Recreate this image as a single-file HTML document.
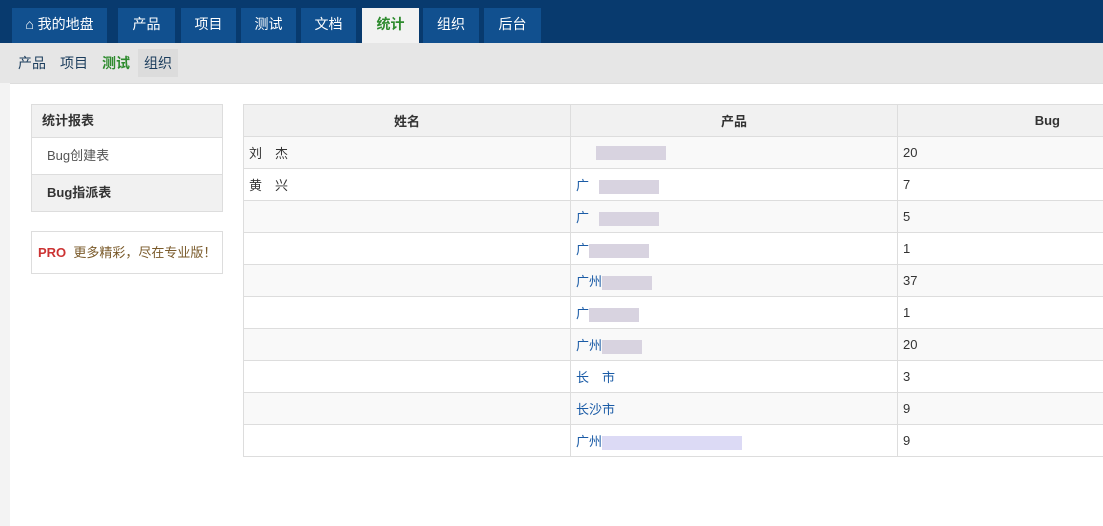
<!DOCTYPE html>
<html><head><meta charset="utf-8"><style>
body{margin:0;width:1103px;height:525px;overflow:hidden;background:#f3f3f3;font-family:"Liberation Sans","Noto Sans CJK SC",sans-serif;font-size:13px;color:#333;position:relative}
.top{position:absolute;left:0;top:0;width:1103px;height:43px;background:#083a6e}
.tab{position:absolute;top:8px;height:35px;line-height:33px;background:#11508f;color:#fff;text-align:center;font-size:14px}
.tab.act{background:#f2f2f2;color:#2e8b2e;font-weight:bold}
.sub{position:absolute;top:43px;left:0;width:1103px;height:40px;background:#e6e6e6}
.sub span{position:absolute;top:6px;height:28px;line-height:28px;font-size:14px;color:#1a3c5c}
.main{position:absolute;left:10px;top:83px;width:1093px;height:442px;background:#fff;border-top:1px solid #ddd}
.side{position:absolute;left:31px;width:190px;border:1px solid #ddd}
table{position:absolute;left:243px;top:104px;border-collapse:collapse;width:980px;table-layout:fixed}
td,th{border:1px solid #ddd;height:31px;padding:0 5px;font-size:13px;text-align:left;overflow:hidden;white-space:nowrap}
th{background:#f1f1f1;text-align:center;font-weight:bold}
tr:nth-child(even) td{background:#f9f9f9}
a{color:#1a5ba6;text-decoration:none}
.blur{display:inline-block;background:#d8d3e0;height:14px;vertical-align:middle}
</style></head><body>
<div class="top">
<div class="tab" style="left:12px;width:95px">⌂ 我的地盘</div>
<div class="tab" style="left:118px;width:57px">产品</div>
<div class="tab" style="left:181px;width:55px">项目</div>
<div class="tab" style="left:241px;width:55px">测试</div>
<div class="tab" style="left:301px;width:55px">文档</div>
<div class="tab act" style="left:362px;width:57px">统计</div>
<div class="tab" style="left:423px;width:56px">组织</div>
<div class="tab" style="left:484px;width:57px">后台</div>
</div>
<div class="sub">
<span style="left:18px">产品</span><span style="left:60px">项目</span><span style="left:102px;color:#2e8b2e;font-weight:bold">测试</span><span style="left:138px;padding:0 6px;background:#dcdcdc">组织</span>
</div>
<div class="main"></div>
<div class="side" style="top:104px">
<div style="height:32px;line-height:32px;background:#f1f1f1;padding-left:10px;font-weight:bold;border-bottom:1px solid #ddd">统计报表</div>
<div style="height:36px;line-height:36px;padding-left:15px;color:#555;border-bottom:1px solid #ddd">Bug创建表</div>
<div style="height:36px;line-height:36px;padding-left:15px;background:#f1f1f1;font-weight:bold">Bug指派表</div>
</div>
<div class="side" style="top:231px;height:41px;line-height:41px;padding-left:6px;width:184px"><span style="color:#c33;font-weight:bold">PRO</span> <span style="color:#7a5a2a">&nbsp;更多精彩，尽在专业版！</span></div>
<table>
<tr><th style="width:316px">姓名</th><th style="width:316px">产品</th><th style="text-align:right;padding-right:162px">Bug</th></tr>
<tr><td>刘　杰</td><td><span class="blur" style="width:70px;margin-left:20px"></span></td><td>20</td></tr>
<tr><td>黄　兴</td><td><a>广</a><span class="blur" style="width:60px;margin-left:10px"></span></td><td>7</td></tr>
<tr><td>　</td><td><a>广</a><span class="blur" style="width:60px;margin-left:10px"></span></td><td>5</td></tr>
<tr><td>　</td><td><a>广</a><span class="blur" style="width:60px"></span></td><td>1</td></tr>
<tr><td>　</td><td><a>广州</a><span class="blur" style="width:50px"></span></td><td>37</td></tr>
<tr><td>　</td><td><a>广</a><span class="blur" style="width:50px"></span></td><td>1</td></tr>
<tr><td>　</td><td><a>广州</a><span class="blur" style="width:40px"></span></td><td>20</td></tr>
<tr><td>　</td><td><a>长　市</a></td><td>3</td></tr>
<tr><td>　</td><td><a>长沙市</a></td><td>9</td></tr>
<tr><td>　</td><td><a>广州</a><span class="blur" style="width:140px;background:#dcdaf5"></span></td><td>9</td></tr>
</table>
</body></html>
